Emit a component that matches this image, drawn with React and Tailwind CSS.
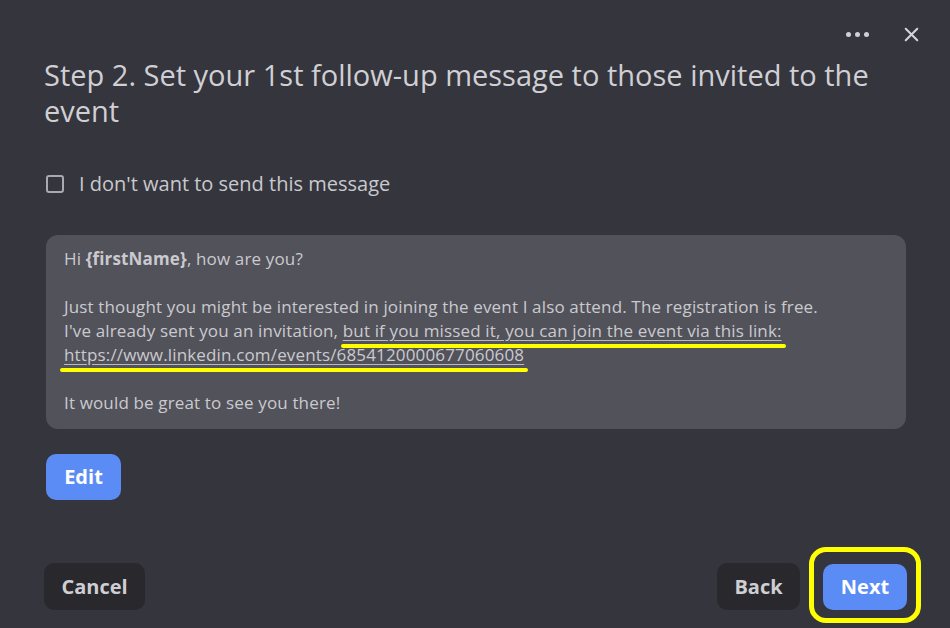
import { X } from 'lucide-react';

function Marked({ children, className }) {
  // yellow marker drawn by hand in the screenshot
  return (
    <span className="relative underline underline-offset-[3px] decoration-[#b9b9c0]">
      {children}
      <span className={`absolute h-[4px] rounded-full bg-[#ffff00] ${className}`}></span>
    </span>
  );
}

export default function App() {
  return (
    <div className="w-[950px] h-[628px] bg-[#35353d] text-[#d0d0d4] flex flex-col overflow-hidden" style={{ fontFamily: '"Open Sans", Lato, sans-serif' }}>
      <div className="flex justify-end items-center gap-[31px] pr-[27px] pt-[22px] h-[46px]">
        <div className="flex gap-[4px]">
          <span className="w-[5px] h-[5px] rounded-full bg-[#cfcfd4]"></span>
          <span className="w-[5px] h-[5px] rounded-full bg-[#cfcfd4]"></span>
          <span className="w-[5px] h-[5px] rounded-full bg-[#cfcfd4]"></span>
        </div>
        <X className="w-[23px] h-[23px] text-[#d4d4d8]" strokeWidth={2.2} />
      </div>

      <h1 className="px-[44px] pt-[11px] text-[29px] leading-[36px] font-normal text-[#d0d0d4]">
        Step 2. Set your 1st follow-up message to those invited to the event
      </h1>

      <label className="flex items-center gap-[15px] px-[46px] mt-[40px]">
        <span className="w-[18px] h-[18px] rounded-[3px] border-2 border-[#a9a9af]"></span>
        <span className="text-[20px] text-[#c9c9ce]">I don't want to send this message</span>
      </label>

      <div className="ml-[46px] mr-[44px] mt-[36px] h-[194px] rounded-[12px] bg-[#52525b] px-[18px] pt-[12px] text-[17px] tracking-[0.15px] leading-[24px] text-[#cacace]">
        <p>Hi <b className="font-bold">{'{firstName}'}</b>, how are you?</p>
        <p>&nbsp;</p>
        <p>Just thought you might be interested in joining the event I also attend. The registration is free.</p>
        <p>
          I've already sent you an invitation,{' '}
          <Marked className="left-[-2px] right-[-4px] bottom-[-6px]">but if you missed it, you can join the event via this link:</Marked>
        </p>
        <p>
          <Marked className="left-[-4px] right-[-4px] bottom-[-6px]">https://www.linkedin.com/events/6854120000677060608</Marked>
        </p>
        <p>&nbsp;</p>
        <p>It would be great to see you there!</p>
      </div>

      <div className="px-[46px] mt-[25px]">
        <button className="w-[75px] h-[46px] rounded-[10px] bg-[#5b8cf5] text-white text-[20px] font-bold">Edit</button>
      </div>

      <div className="flex items-start justify-between pl-[44px] pr-[29px] mt-[47px]">
        <button className="mt-[16px] w-[101px] h-[47px] rounded-[10px] bg-[#28282d] text-[#cfcfd3] text-[20px] font-bold">Cancel</button>
        <div className="flex items-start gap-[9px]">
          <button className="mt-[16px] w-[83px] h-[47px] rounded-[10px] bg-[#28282d] text-[#cfcfd3] text-[20px] font-bold">Back</button>
          <div className="pt-[12px] pb-[8px] px-[9px] rounded-[17px] border-[5px] border-[#ffff00]">
            <button className="w-[84px] h-[46px] rounded-[10px] bg-[#5b8cf5] text-white text-[20px] font-bold block">Next</button>
          </div>
        </div>
      </div>
    </div>
  );
}
